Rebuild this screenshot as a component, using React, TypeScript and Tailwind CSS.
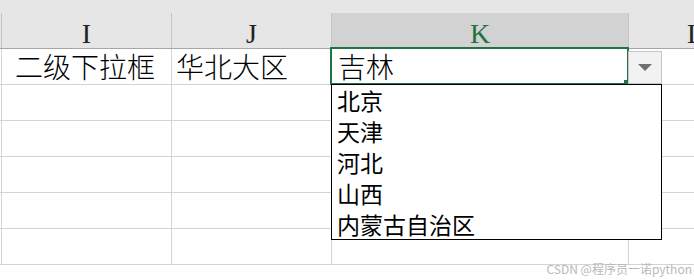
const cjk = "font-['SimSun','Noto_Sans_CJK_SC',sans-serif]";

const rows = [0, 1, 2, 3, 4, 5];
const options = ["北京", "天津", "河北", "山西", "内蒙古自治区"];

export default function App() {
  return (
    <div className="relative h-[280px] w-[694px] overflow-hidden bg-white">
      {/* header band */}
      <div className="h-[13px] bg-[#e6e6e6]" />
      <div className="flex h-[36px] border-b border-[#a6a6a6] bg-[#e6e6e6] font-['Liberation_Serif',serif] text-[28px] leading-[35px]">
        <div className="w-[2px] shrink-0 border-r border-[#c4c4c4]" />
        <div className="w-[170px] shrink-0 border-r border-[#c4c4c4] pt-[3px] text-center text-[#222]">I</div>
        <div className="w-[160px] shrink-0 border-r border-[#c4c4c4] pt-[3px] text-center text-[#222]">J</div>
        <div className="w-[297px] shrink-0 border-r border-[#c4c4c4] bg-[#d2d2d2] pt-[3px] text-center text-[#217346]">K</div>
        <div className="flex-1 pt-[3px] pl-[58px] text-[#222]">L</div>
      </div>

      {/* grid rows */}
      {rows.map((r) => (
        <div key={r} className={`flex h-[36px] border-b border-[#d4d4d4] ${cjk} text-[28px] leading-[35px] font-light text-black`}>
          <div className="w-[2px] shrink-0 border-r border-[#d4d4d4]" />
          <div className="w-[170px] shrink-0 border-r border-[#d4d4d4] pl-[13px]">{r === 0 ? "二级下拉框" : ""}</div>
          <div className="w-[160px] shrink-0 border-r border-[#d4d4d4] pl-[4px]">{r === 0 ? "华北大区" : ""}</div>
          <div className="w-[297px] shrink-0 border-r border-[#d4d4d4] pl-[6px]">{r === 0 ? "吉林" : ""}</div>
          <div className="flex-1" />
        </div>
      ))}

      {/* active cell */}
      <div className="absolute left-[330px] top-[47px] h-[38px] w-[299px] border-2 border-[#217346]" />
      <div className="absolute left-[624px] top-[80px] h-[5px] w-[5px] bg-[#217346]" />

      {/* dropdown button */}
      <div className="absolute left-[628px] top-[51px] flex h-[33px] w-[34px] items-center justify-center border border-[#c6c6c6] bg-[#f2f2f2]">
        <svg width="14" height="7" viewBox="0 0 14 7">
          <path d="M0 0H14L7 7Z" fill="#707070" />
        </svg>
      </div>

      {/* dropdown list */}
      <ul className={`absolute left-[331px] top-[84px] h-[156px] w-[331px] border border-black bg-white pl-[5px] ${cjk} text-[23px] leading-[31px] text-black`}>
        {options.map((o) => (
          <li key={o}>{o}</li>
        ))}
      </ul>

      {/* watermark */}
      <div className="absolute bottom-[4px] right-[2px] font-['Noto_Sans_CJK_SC',sans-serif] text-[12px] leading-[14px] text-[#b8b8b8]">
        CSDN @程序员一诺python
      </div>
    </div>
  );
}
